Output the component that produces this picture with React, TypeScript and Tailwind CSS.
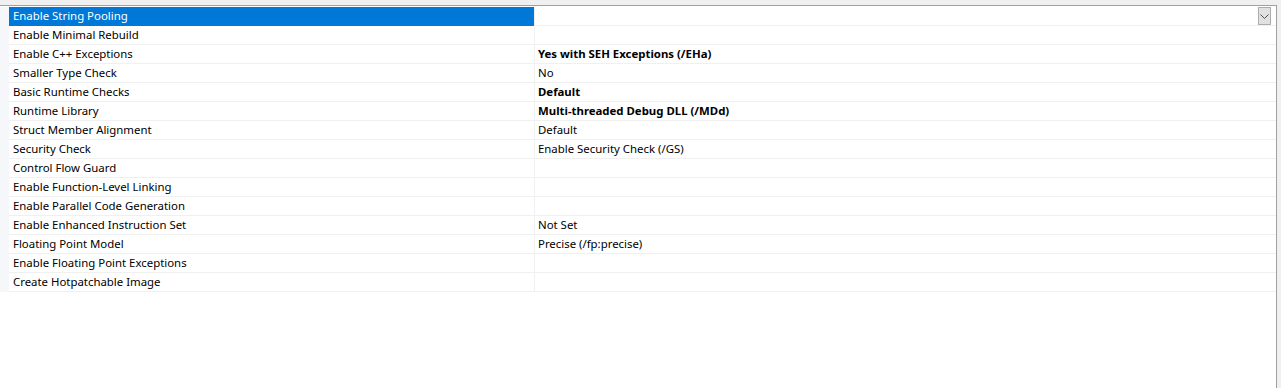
import React from "react";

const rows: { name: string; value: string; bold?: boolean }[] = [
  { name: "Enable String Pooling", value: "" },
  { name: "Enable Minimal Rebuild", value: "" },
  { name: "Enable C++ Exceptions", value: "Yes with SEH Exceptions (/EHa)", bold: true },
  { name: "Smaller Type Check", value: "No" },
  { name: "Basic Runtime Checks", value: "Default", bold: true },
  { name: "Runtime Library", value: "Multi-threaded Debug DLL (/MDd)", bold: true },
  { name: "Struct Member Alignment", value: "Default" },
  { name: "Security Check", value: "Enable Security Check (/GS)" },
  { name: "Control Flow Guard", value: "" },
  { name: "Enable Function-Level Linking", value: "" },
  { name: "Enable Parallel Code Generation", value: "" },
  { name: "Enable Enhanced Instruction Set", value: "Not Set" },
  { name: "Floating Point Model", value: "Precise (/fp:precise)" },
  { name: "Enable Floating Point Exceptions", value: "" },
  { name: "Create Hotpatchable Image", value: "" },
];

export default function App() {
  return (
    <div
      className="w-[1281px] h-[388px] bg-[#f0f0f0] flex flex-col text-[11.4px] text-black overflow-hidden"
      style={{ fontFamily: '"Segoe UI", "Noto Sans", "Liberation Sans", sans-serif' }}
    >
      <div className="h-[5px] shrink-0" />
      <div className="flex flex-1 min-h-0">
        <div className="w-[1277px] shrink-0 bg-white border-t border-r border-[#a0a0a0] flex flex-col pt-[1px]">
          {rows.map((r, i) => {
            const sel = i === 0;
            return (
              <div key={r.name} className="flex h-[19px]">
                <div className="w-[9px] bg-[#f5f7fa] shrink-0" />
                <div
                  className={`w-[525px] shrink-0 pl-[4px] flex items-center border-b ${
                    sel ? "bg-[#0078d7] text-white border-[#0078d7]" : "border-[#f0f0f0]"
                  }`}
                >
                  <span className="leading-none whitespace-nowrap">{r.name}</span>
                </div>
                <div className="flex-1 flex items-center border-l border-b border-[#f0f0f0] pl-[3px] relative">
                  <span className={`leading-none whitespace-nowrap ${r.bold ? "font-bold" : ""}`}>{r.value}</span>
                  {sel && (
                    <div className="absolute right-[5px] top-0 w-[13px] h-[18px] bg-[#e1e1e1] border border-[#adadad] flex items-center justify-center">
                      <svg width="9" height="5" viewBox="0 0 9 5">
                        <path d="M0.5 0.5 L4.5 4.5 L8.5 0.5" fill="none" stroke="#505050" strokeWidth="1" />
                      </svg>
                    </div>
                  )}
                </div>
              </div>
            );
          })}
          <div className="flex-1" />
        </div>
        <div className="flex-1" />
      </div>
    </div>
  );
}
